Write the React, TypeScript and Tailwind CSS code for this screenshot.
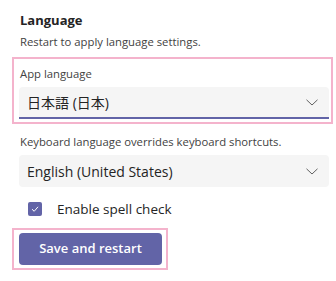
const font = { fontFamily: '"Open Sans", "Noto Sans CJK JP", sans-serif' };

function Chevron() {
  return (
    <svg width="12" height="7" viewBox="0 0 12 7" fill="none">
      <path d="M0.5 0.8 L6 6 L11.5 0.8" stroke="#616161" strokeWidth="1" />
    </svg>
  );
}

function Select({ value, underline }: { value: string; underline?: boolean }) {
  return (
    <div
      className={`flex h-8 items-center justify-between bg-[#f5f5f5] pl-2 pr-[11px] text-[14px] text-[#242424] ${
        underline ? "rounded-t-[4px] border-b-2 border-[#6264a7]" : "rounded-[4px]"
      }`}
    >
      <span>{value}</span>
      <Chevron />
    </div>
  );
}

export default function App() {
  return (
    <div className="w-[336px] h-[281px] bg-white pt-[10px] pl-[19px] pr-[3px]" style={font}>
      <h2 className="pl-px text-[13px] font-bold leading-5 text-[#242424]">Language</h2>
      <p className="mt-[2px] pl-px text-[11.3px] leading-5 text-[#424242]">Restart to apply language settings.</p>

      {/* App language (highlighted) */}
      <div className="-ml-[7px] mt-[5px] border-2 border-[#f4b3cc] pl-[5px] pr-[2px] pt-[5px] pb-[3px]">
        <div className="mb-[3px] pl-px text-[11.3px] leading-5 text-[#424242]">App language</div>
        <Select value="日本語 (日本)" underline />
      </div>

      <p className="mt-[8px] pl-px text-[11.3px] leading-5 text-[#424242]">
        Keyboard language overrides keyboard shortcuts.
      </p>
      <div className="mt-[3px] mr-[4px]">
        <Select value="English (United States)" />
      </div>

      <label className="mt-[12px] flex h-5 items-center gap-[15px] pl-[9px] text-[13.5px] text-[#242424]">
        <span className="flex h-[14px] w-[14px] items-center justify-center rounded-[2px] bg-[#6264a7]">
          <svg width="10" height="10" viewBox="0 0 10 10" fill="none">
            <path d="M2 5.2 L4.2 7.3 L8 2.8" stroke="white" strokeWidth="1" />
          </svg>
        </span>
        Enable spell check
      </label>

      <div className="-ml-[7px] mt-[9px] inline-block border-2 border-[#f4b3cc] py-[3px] pl-[5px] pr-[4px]">
        <button className="block h-8 w-[143px] rounded-[4px] bg-[#6264a7] text-[13px] font-semibold text-white">
          Save and restart
        </button>
      </div>
    </div>
  );
}
